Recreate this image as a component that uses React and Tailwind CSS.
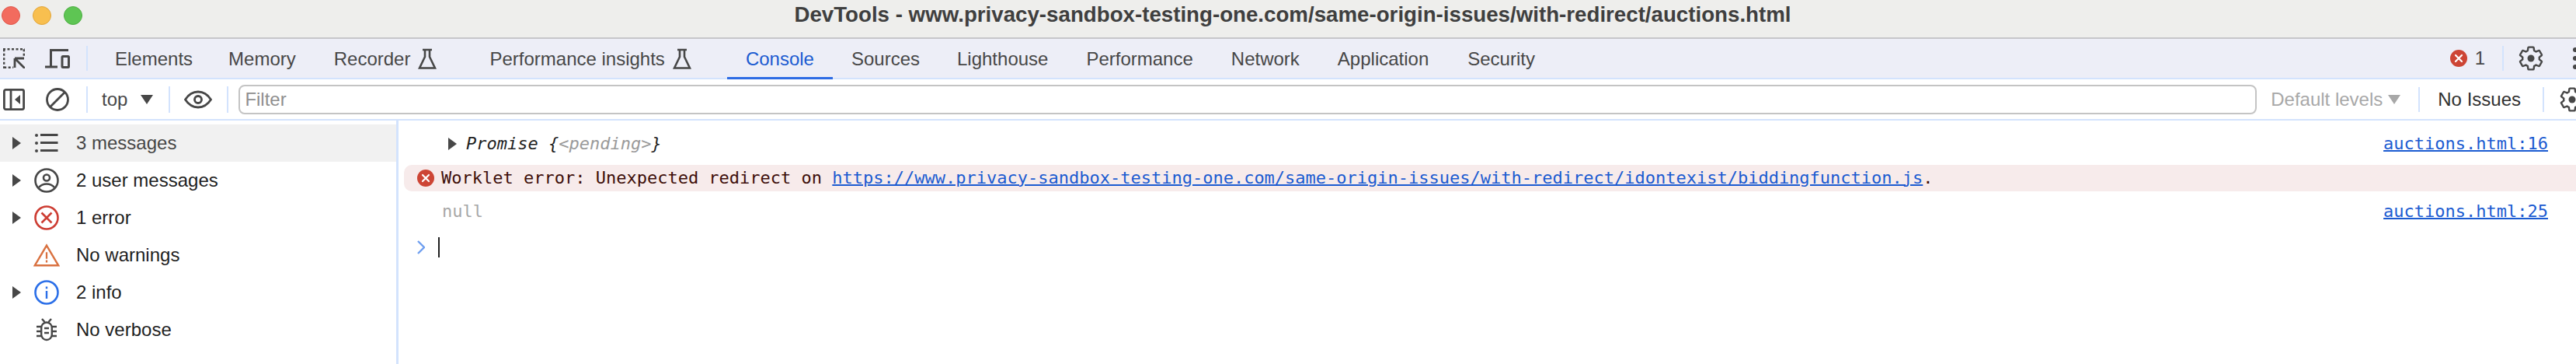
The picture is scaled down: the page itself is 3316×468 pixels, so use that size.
const SANS = "font-['Liberation_Sans',Arial,sans-serif]";

function Flask({ className = "" }) {
  return (
    <svg viewBox="0 0 24 28" className={"w-[24px] h-[28px] " + className} fill="none" stroke="#474747" strokeWidth="2.6">
      <path d="M6 2h12M9 2v9L2 25.5h20L15 11V2" strokeLinejoin="miter" />
    </svg>
  );
}

function ErrorDot({ size = 22 }) {
  return (
    <svg viewBox="0 0 22 22" style={{ width: size, height: size }} className="shrink-0">
      <circle cx="11" cy="11" r="11" fill="#cd4535" />
      <path d="M7 7l8 8M15 7l-8 8" stroke="#fff" strokeWidth="2.2" strokeLinecap="round" />
    </svg>
  );
}

function Gear({ className = "" }) {
  return (
    <svg viewBox="0 0 24 24" className={"w-[36px] h-[36px] shrink-0 " + className} fill="none" stroke="#474747" strokeWidth="1.6" strokeLinejoin="round">
      <path d="M19.14 12.94c.04-.3.06-.61.06-.94 0-.32-.02-.64-.07-.94l2.03-1.58c.18-.14.23-.41.12-.61l-1.92-3.32c-.12-.22-.37-.29-.59-.22l-2.39.96c-.5-.38-1.03-.7-1.62-.94l-.36-2.54c-.04-.24-.24-.41-.48-.41h-3.84c-.24 0-.43.17-.47.41l-.36 2.54c-.59.24-1.13.57-1.62.94l-2.39-.96c-.22-.08-.47 0-.59.22L2.74 8.87c-.12.21-.08.47.12.61l2.03 1.58c-.05.3-.09.63-.09.94s.02.64.07.94l-2.03 1.58c-.18.14-.23.41-.12.61l1.92 3.32c.12.22.37.29.59.22l2.39-.96c.5.38 1.03.7 1.62.94l.36 2.54c.05.24.24.41.48.41h3.84c.24 0 .44-.17.47-.41l.36-2.54c.59-.24 1.13-.56 1.62-.94l2.39.96c.22.08.47 0 .59-.22l1.92-3.32c.12-.22.07-.47-.12-.61l-2.01-1.58z" />
      <circle cx="12" cy="12" r="3" fill="#474747" stroke="none" />
    </svg>
  );
}

function Sep({ className = "" }) {
  return <div className={"w-[2px] bg-[#d3e3fd] shrink-0 " + className} />;
}

function Tab({ label, active, flask, pad = "pr-6" }) {
  return (
    <div className={"h-[52px] flex items-center pl-6 shrink-0 border-b-[3px] pt-[3px] " + pad + " " + (active ? "border-[#2d6be4] text-[#1b5bd1]" : "border-transparent text-[#474747]")}>
      <span>{label}</span>
      {flask && <Flask className="ml-[10px]" />}
    </div>
  );
}

function Tri({ color = "#474747" }) {
  return (
    <svg viewBox="0 0 11 16" className="w-[11px] h-[16px] shrink-0">
      <path d="M0 0l11 8-11 8z" fill={color} />
    </svg>
  );
}

function SideRow({ tri, icon, label, active }) {
  return (
    <div className={"h-[48px] flex items-center pl-[16px] " + (active ? "bg-[#f1f1f1] text-[#474747]" : "text-[#1f1f1f]")}>
      <div className="w-[11px] shrink-0">{tri && <Tri />}</div>
      <div className="w-[34px] ml-[16px] mr-[21px] flex justify-center shrink-0">{icon}</div>
      <span>{label}</span>
    </div>
  );
}

const ListIcon = (
  <svg viewBox="0 0 30 24" className="w-[30px] h-[24px]" fill="#474747">
    <circle cx="2" cy="2" r="2" /><circle cx="2" cy="12" r="2" /><circle cx="2" cy="22" r="2" />
    <path d="M7 0h22.500v3H7zM7 10h22.500v3H7zM7 20h22.500v3H7z" />
  </svg>
);
const UserIcon = (
  <svg viewBox="0 0 32 32" className="w-[32px] h-[32px]" fill="none" stroke="#474747" strokeWidth="2.600">
    <circle cx="16" cy="16" r="14.500" />
    <circle cx="16" cy="12.500" r="4" />
    <path d="M6 25c3-3.500 6.500-4.500 10-4.500S23 21.500 26 25" />
  </svg>
);
const ErrIcon = (
  <svg viewBox="0 0 32 32" className="w-[32px] h-[32px]" fill="none" stroke="#cd3d33" strokeWidth="2.600">
    <circle cx="16" cy="16" r="14.500" />
    <path d="M9.500 9.500l13 13M22.500 9.500l-13 13" />
  </svg>
);
const WarnIcon = (
  <svg viewBox="0 0 36 32" className="w-[36px] h-[32px]" fill="none">
    <path d="M18 3L2 30h32z" stroke="#d97140" strokeWidth="2.600" />
    <path d="M16.800 12h2.400v9h-2.400zM16.800 23h2.400v3h-2.400z" fill="#d97140" />
  </svg>
);
const InfoIcon = (
  <svg viewBox="0 0 32 32" className="w-[32px] h-[32px]" fill="none">
    <circle cx="16" cy="16" r="14.500" stroke="#2b6fe8" strokeWidth="2.600" />
    <path d="M14.800 8.500h2.400v2.800h-2.400zM14.800 14h2.400v10h-2.400z" fill="#2b6fe8" />
  </svg>
);
const BugIcon = (
  <svg viewBox="0 0 26 30" className="w-[26px] h-[30px]" fill="none" stroke="#474747" strokeWidth="2.400">
    <path d="M7 1l3.500 4M19 1l-3.500 4" />
    <rect x="6.200" y="5.500" width="13.600" height="22.500" rx="6.800" />
    <path d="M0 11h6M0 17h6M0 23h6M20 11h6M20 17h6M20 23h6M10 13h6M10 19h6" />
  </svg>
);

function Mono({ className = "", children }) {
  return <div className={"font-['DejaVu_Sans_Mono','Liberation_Mono',monospace] text-[22px] leading-[34px] whitespace-pre " + className}>{children}</div>;
}

function SourceLink({ children }) {
  return <Mono className="text-[#1b5bd1] underline decoration-2">{children}</Mono>;
}

export default function App() {
  return (
    <div className={"w-[3316px] h-[468px] bg-white overflow-hidden flex flex-col text-[24px] " + SANS}>
      <div className="h-[48px] bg-[#eeeeec] border-b-[2px] border-[#c6c6ca] relative flex items-center justify-center shrink-0 box-content">
        <div className="absolute left-[2px] top-[8px] flex gap-[16px]">
          <div className="w-[24px] h-[24px] rounded-full bg-[#f26b5e] border border-[#e0574b]" />
          <div className="w-[24px] h-[24px] rounded-full bg-[#f8bf4f] border border-[#e2a63b]" />
          <div className="w-[24px] h-[24px] rounded-full bg-[#5ec553] border border-[#4eae44]" />
        </div>
        <span className="font-bold text-[27.700px] text-[#3f3f3f] pb-[10px] pl-[12px]">DevTools - www.privacy-sandbox-testing-one.com/same-origin-issues/with-redirect/auctions.html</span>
      </div>

      <div className="h-[52px] bg-[#edeef7] border-b-[2px] border-[#d3e3fd] flex items-center shrink-0 relative overflow-visible">
        <svg viewBox="0 0 28 26" className="w-[28px] h-[26px] ml-[4px] shrink-0" fill="none" stroke="#474747" strokeWidth="2.400">
          <path d="M0 1.200h28M1.200 1.200v24.800M26.800 1.200v10M1.200 24.800h12" strokeDasharray="3 2.500" />
          <path d="M15 13h12M15 13v12M15 13l13 13" strokeWidth="2.800" />
        </svg>
        <svg viewBox="0 0 32 25" className="w-[32px] h-[25px] ml-[26px] shrink-0" fill="none" stroke="#474747" strokeWidth="3">
          <path d="M30 1.500H7.500v20M0 23h16" />
          <rect x="22" y="9.500" width="8.500" height="14" rx="1" />
        </svg>
        <Sep className="h-[32px] ml-[21px]" />
        <div className="ml-[11px] flex items-start h-[50px]">
          <Tab label="Elements" pad="pr-[22px]" />
          <Tab label="Memory" pad="pr-[25px]" />
          <Tab label="Recorder" flask pad="pr-[44px]" />
          <Tab label="Performance insights" flask pad="pr-[46px]" />
          <Tab label="Console" active />
          <Tab label="Sources" />
          <Tab label="Lighthouse" pad="pr-[25px]" />
          <Tab label="Performance" pad="pr-[25px]" />
          <Tab label="Network" pad="pr-[25px]" />
          <Tab label="Application" pad="pr-[26px]" />
          <Tab label="Security" />
        </div>
        <div className="ml-auto flex items-center">
          <ErrorDot />
          <span className="ml-[10px] text-[#474747]">1</span>
          <Sep className="h-[32px] ml-[22px]" />
          <Gear className="ml-[17px]" />
          <div className="ml-[36px] mr-[-3px] flex flex-col gap-[5px] w-[7px]">
            <div className="w-[7px] h-[6px] rounded-full bg-[#474747]" />
            <div className="w-[7px] h-[6px] rounded-full bg-[#474747]" />
            <div className="w-[7px] h-[6px] rounded-full bg-[#474747]" />
          </div>
        </div>
      </div>

      <div className="h-[53px] border-b-[2px] border-[#d3e3fd] flex items-center shrink-0">
        <svg viewBox="0 0 28 28" className="w-[28px] h-[28px] ml-[4px] shrink-0" fill="none" stroke="#474747" strokeWidth="2.800">
          <rect x="1.400" y="1.400" width="25.200" height="25.200" rx="2" />
          <path d="M10 1v26" />
          <path d="M22 8v12l-7-6z" fill="#474747" stroke="none" />
        </svg>
        <svg viewBox="0 0 30 30" className="w-[30px] h-[30px] ml-[27px] shrink-0" fill="none" stroke="#474747" strokeWidth="2.800">
          <circle cx="15" cy="15" r="13.500" />
          <path d="M5.500 24.500l19-19" />
        </svg>
        <Sep className="h-[34px] ml-[22px]" />
        <span className="ml-[18px] text-[#474747]">top</span>
        <svg viewBox="0 0 16 12" className="w-[16px] h-[12px] ml-[17px] shrink-0"><path d="M0 0h16L8 12z" fill="#474747" /></svg>
        <Sep className="h-[34px] ml-[20px]" />
        <svg viewBox="0 0 36 24" className="w-[36px] h-[24px] ml-[18px] shrink-0" fill="none" stroke="#474747" strokeWidth="2.800">
          <path d="M1.500 12C6 5 12 2 18 2s12 3 16.500 10C30 19 24 22 18 22S6 19 1.500 12z" />
          <circle cx="18" cy="12" r="4.500" />
        </svg>
        <Sep className="h-[34px] ml-[19px]" />
        <div className="ml-[13px] min-w-0 grow h-[38px] rounded-[8px] border-[2px] border-[#c4c4c4] flex items-center pl-[6px] text-[#8f8f8f]">Filter</div>
        <span className="ml-[18px] text-[#a8a8a8] shrink-0">Default levels</span>
        <svg viewBox="0 0 16 12" className="w-[16px] h-[12px] ml-[7px] shrink-0"><path d="M0 0h16L8 12z" fill="#a8a8a8" /></svg>
        <Sep className="h-[32px] ml-[23px]" />
        <span className="ml-[23px] text-[#303030] shrink-0">No Issues</span>
        <Sep className="h-[32px] ml-[28px]" />
        <Gear className="ml-[18px] mr-[-13px]" />
      </div>

      <div className="flex flex-1 min-h-0">
        <div className="w-[513px] border-r-[3px] border-[#d3e3fd] pt-[5px] shrink-0">
          <SideRow tri active icon={ListIcon} label="3 messages" />
          <SideRow tri icon={UserIcon} label="2 user messages" />
          <SideRow tri icon={ErrIcon} label="1 error" />
          <SideRow icon={WarnIcon} label="No warnings" />
          <SideRow tri icon={InfoIcon} label="2 info" />
          <SideRow icon={BugIcon} label="No verbose" />
        </div>
        <div className="flex-1 min-w-0 pt-[13px]">
          <div className="h-[34px] flex items-center pl-[64px] pr-[36px]">
            <Tri />
            <Mono className="ml-[12px] italic text-[#1f1f1f]">Promise {"{"}<span className="text-[#9a9a9a]">{"<pending>"}</span>{"}"}</Mono>
            <div className="ml-auto"><SourceLink>auctions.html:16</SourceLink></div>
          </div>
          <div className="mt-[10px] ml-[7px] h-[34px] bg-[#f7ebeb] rounded-l-[10px] flex items-center pl-[17px]">
            <ErrorDot />
            <Mono className="ml-[9px] text-[#3e0f0a]">Worklet error: Unexpected redirect on <span className="text-[#1b5bd1] underline decoration-2">https://www.privacy-sandbox-testing-one.com/same-origin-issues/with-redirect/idontexist/biddingfunction.js</span>.</Mono>
          </div>
          <div className="mt-[9px] h-[34px] flex items-center pl-[56px] pr-[36px]">
            <Mono className="text-[#a8a8a8]">null</Mono>
            <div className="ml-auto"><SourceLink>auctions.html:25</SourceLink></div>
          </div>
          <div className="mt-[16px] h-[26px] flex items-center pl-[24px]">
            <svg viewBox="0 0 10 18" className="w-[10px] h-[18px] shrink-0" fill="none" stroke="#6f9ff0" strokeWidth="2.400"><path d="M1 1l8 8-8 8" /></svg>
            <div className="w-[2px] h-[26px] bg-[#1f1f1f] ml-[17px]" />
          </div>
        </div>
      </div>
    </div>
  );
}
